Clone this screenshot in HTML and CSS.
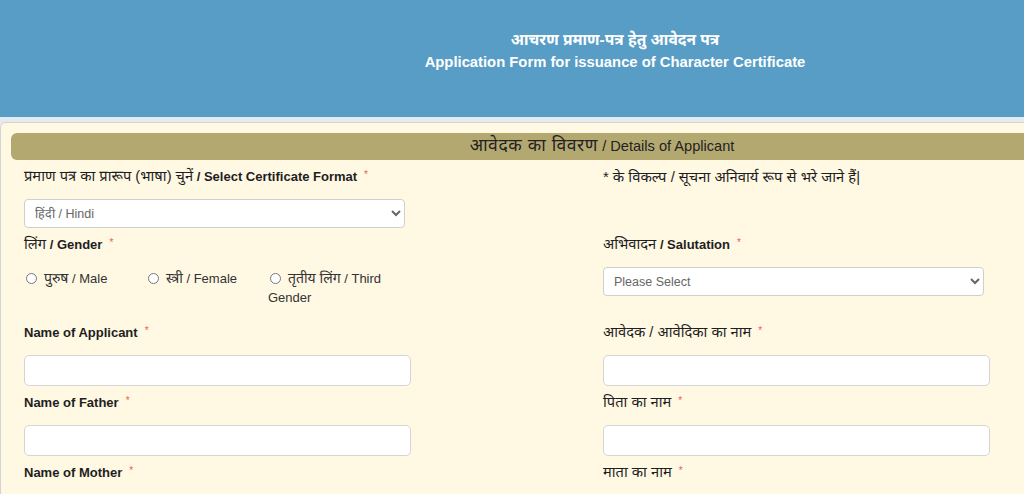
FILE: index.html
```html
<!DOCTYPE html>
<html lang="hi">
<head>
<meta charset="utf-8">
<title>Character Certificate Application</title>
<link rel="stylesheet" href="styles.css">
</head>
<body>
<div class="page">
  <header class="top">
    <h1 class="title-hi">आचरण प्रमाण-पत्र हेतु आवेदन पत्र</h1>
    <h2 class="title-en">Application Form for issuance of Character Certificate</h2>
  </header>
  <main class="panel">
    <div class="bar"><span class="hi-bar">आवेदक का विवरण</span> / Details of Applicant</div>
    <div class="form">
      <div class="field">
        <label class="lbl"><span class="hi">प्रमाण पत्र का प्रारूप (भाषा) चुनें</span> / Select Certificate Format<span class="req">*</span></label>
        <select class="sel"><option>हिंदी / Hindi</option></select>
      </div>
      <div class="field">
        <p class="note">* के विकल्प / सूचना अनिवार्य रूप से भरे जाने हैं|</p>
      </div>

      <div class="field">
        <label class="lbl"><span class="hi">लिंग</span> / Gender<span class="req">*</span></label>
        <div class="radios">
          <label class="opt"><input type="radio" name="g"><span class="hi-r">पुरुष</span> / Male</label>
          <label class="opt"><input type="radio" name="g"><span class="hi-r">स्त्री</span> / Female</label>
          <label class="opt opt-wrap"><input type="radio" name="g"><span class="hi-r">तृतीय लिंग</span> / Third Gender</label>
        </div>
      </div>
      <div class="field">
        <label class="lbl"><span class="hi">अभिवादन</span> / Salutation<span class="req">*</span></label>
        <select class="sel"><option>Please Select</option></select>
      </div>

      <div class="field">
        <label class="lbl">Name of Applicant<span class="req">*</span></label>
        <input class="inp" type="text">
      </div>
      <div class="field">
        <label class="lbl"><span class="hi">आवेदक / आवेदिका का नाम</span><span class="req">*</span></label>
        <input class="inp" type="text">
      </div>

      <div class="field">
        <label class="lbl">Name of Father<span class="req">*</span></label>
        <input class="inp" type="text">
      </div>
      <div class="field">
        <label class="lbl"><span class="hi">पिता का नाम</span><span class="req">*</span></label>
        <input class="inp" type="text">
      </div>

      <div class="field">
        <label class="lbl">Name of Mother<span class="req">*</span></label>
        <input class="inp" type="text">
      </div>
      <div class="field">
        <label class="lbl"><span class="hi">माता का नाम</span><span class="req">*</span></label>
        <input class="inp" type="text">
      </div>
    </div>
  </main>
</div>
</body>
</html>
```
FILE: styles.css
```css
html, body {
  margin: 0;
  padding: 0;
  overflow: hidden;
}
body {
  background: #e6e9ed;
  font-family: "Liberation Sans", Arial, "Noto Sans Devanagari", sans-serif;
  color: #212529;
}
.page {
  width: 1230px;
}
.top {
  height: 117px;
  box-sizing: border-box;
  padding-top: 29px;
  background: #589dc5;
  color: #fff;
  text-align: center;
}
.title-hi {
  margin: 0;
  font-size: 15.5px;
  line-height: 22px;
  height: 22px;
  font-weight: bold;
}
.title-en {
  margin: 0;
  font-size: 14.8px;
  line-height: 22px;
  font-weight: bold;
}
.panel {
  margin: 5px 26px 0 0;
  background: #fff8e3;
  border: 1px solid #d4d4d4;
  border-radius: 6px;
  padding: 10px;
  height: 500px;
}
.bar {
  height: 27px;
  line-height: 27px;
  overflow: hidden;
  background: #b4a871;
  border-radius: 6px 0 0 6px;
  text-align: center;
  font-size: 14.6px;
  color: #222;
}
.hi-bar {
  font-size: 17.5px;
  line-height: 1;
  letter-spacing: 0.6px;
}
.form {
  display: grid;
  grid-template-columns: 579px 579px;
  row-gap: 8px;
  padding: 8px 0 0 13px;
}
.field {
  display: flex;
  flex-direction: column;
  align-items: flex-start;
}
.lbl {
  display: block;
  height: 18px;
  font-size: 13px;
  line-height: 18px;
  font-weight: bold;
  color: #1e1e1e;
  margin-bottom: 13px;
  white-space: nowrap;
}
.hi {
  font-weight: normal;
  font-size: 14.7px;
  line-height: 1;
}
.req {
  color: #ef5b55;
  font-size: 10px;
  line-height: 1;
  font-weight: normal;
  margin-left: 7px;
  vertical-align: 3px;
}
.note {
  margin: 0;
  height: 18px;
  font-size: 14.8px;
  line-height: 18px;
  color: #1e1e1e;
  white-space: nowrap;
}
.sel {
  width: 381px;
  height: 29px;
  box-sizing: border-box;
  border: 1px solid #cfcfcf;
  border-radius: 4px;
  background: #fff;
  color: #666;
  font-family: "Liberation Sans", Arial, sans-serif;
  font-size: 12.5px;
  padding: 0 6px;
}
.inp {
  width: 387px;
  height: 31px;
  box-sizing: border-box;
  border: 1px solid #d5d5d5;
  border-radius: 5px;
  background: #fff;
  margin: 0;
}
.radios {
  display: flex;
  height: 38px;
  margin: 2px 0 9px 0;
}
.opt {
  width: 122px;
  font-size: 13px;
  line-height: 19px;
  color: #333;
}
.opt-wrap {
  width: 116px;
}
.opt input {
  width: 11px;
  height: 11px;
  margin: 0 7px 0 2px;
  vertical-align: -1px;
}
.hi-r {
  font-size: 14px;
  line-height: 1;
}
```
